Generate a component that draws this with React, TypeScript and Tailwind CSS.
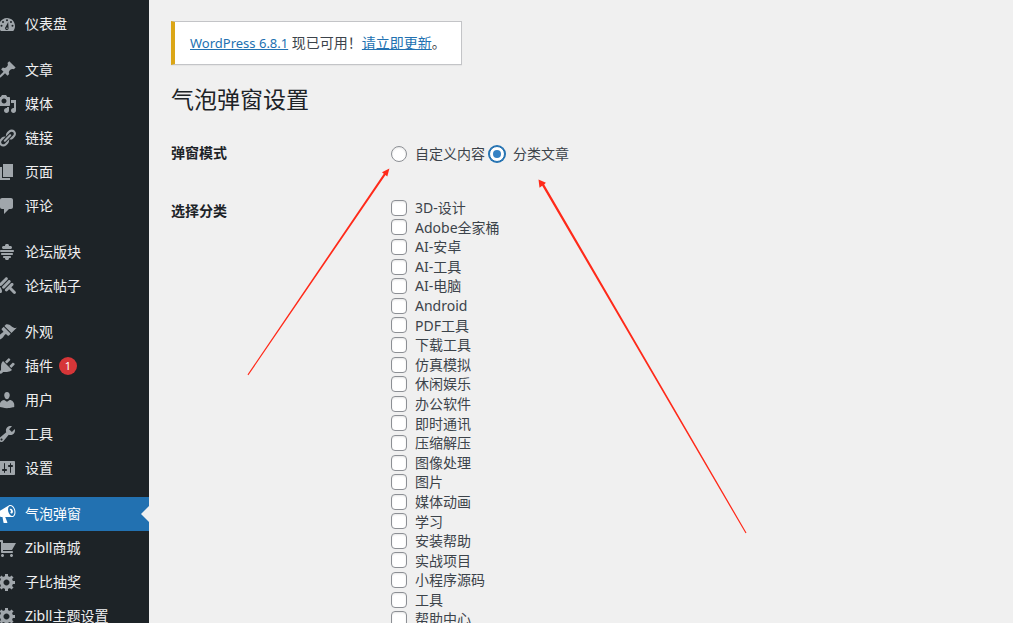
import { useState } from "react";

type MenuItem = { label: string; icon: string; badge?: number; active?: boolean };

const icons: Record<string, string> = {
  dashboard:
    "M3.76 17h12.48c1.1-1.37 1.76-3.11 1.76-5 0-4.42-3.58-8-8-8s-8 3.58-8 8c0 1.89.66 3.63 1.76 5zM10 5.2a1 1 0 1 0 0 2 1 1 0 0 0 0-2zM6 7a1 1 0 1 0 0 2 1 1 0 0 0 0-2zM14 7a1 1 0 1 0 0 2 1 1 0 0 0 0-2zM4.5 10.8a1 1 0 1 0 0 2 1 1 0 0 0 0-2zM15.5 10.8a1 1 0 1 0 0 2 1 1 0 0 0 0-2zM11.2 8l-2.5 4.8c-.2.2-.4.5-.5.8-.4 1.3.5 2.5 1.8 2.4 1.2-.2 1.8-1.4 1.5-2.8zM10 13.4a.8.8 0 1 1 0 1.6.8.8 0 0 1 0-1.6z",
  post: "M10.44 3.02l1.82-1.82 6.36 6.35-1.83 1.82c-1.05-.68-2.48-.57-3.41.36l-.75.75c-.92.93-1.04 2.35-.35 3.41l-1.83 1.82-2.41-2.41-2.8 2.79c-.42.42-3.38 2.71-3.8 2.29s1.86-3.39 2.28-3.81l2.79-2.79L4.1 9.36l1.83-1.82c1.05.69 2.48.57 3.4-.36l.75-.75c.93-.92 1.05-2.35.36-3.41z",
  media:
    "M13 11V4c0-.55-.45-1-1-1h-1.67L9 1H5L3.67 3H2c-.55 0-1 .45-1 1v7c0 .55.45 1 1 1h10c.55 0 1-.45 1-1zM7 4.5c1.38 0 2.5 1.12 2.5 2.5S8.38 9.5 7 9.5 4.5 8.38 4.5 7 5.62 4.5 7 4.5zM14 6h5v10.5c0 1.38-1.12 2.5-2.5 2.5S14 17.88 14 16.5s1.12-2.5 2.5-2.5c.17 0 .34.02.5.05V9h-3V6zm-4 8.05V13h2v3.5c0 1.38-1.12 2.5-2.5 2.5S7 17.88 7 16.5 8.12 14 9.5 14c.17 0 .34.02.5.05z",
  links:
    "M17.74 2.76c1.68 1.69 1.68 4.41 0 6.1l-1.53 1.52c-1.12 1.12-2.7 1.47-4.14 1.09l2.62-2.61.76-.77.76-.76c.84-.84.84-2.2 0-3.04-.84-.85-2.2-.85-3.04 0l-.77.76-3.38 3.38c-.37-1.44-.02-3.02 1.1-4.14l1.52-1.53c1.69-1.68 4.42-1.68 6.1 0zM8.59 13.43l5.34-5.34c.42-.42.42-1.1 0-1.52-.44-.43-1.13-.39-1.53 0l-5.33 5.34c-.42.42-.42 1.1 0 1.52.44.43 1.13.39 1.52 0zm-.76 2.29l4.14-4.15c.38 1.44.03 3.02-1.09 4.14l-1.52 1.53c-1.69 1.68-4.41 1.68-6.1 0-1.68-1.68-1.68-4.42 0-6.1l1.53-1.52c1.12-1.12 2.7-1.47 4.14-1.1l-4.14 4.15c-.85.84-.85 2.2 0 3.05.84.84 2.2.84 3.04 0z",
  page: "M6 15V2h10v13H6zm-1 1h8v2H3V5h2v11z",
  comments:
    "M5 2h9c1.1 0 2 .9 2 2v7c0 1.1-.9 2-2 2h-2l-5 5v-5H5c-1.1 0-2-.9-2-2V4c0-1.1.9-2 2-2z",
  forums:
    "M13.5 7h-7C5.67 7 5 6.33 5 5.5S5.67 4 6.5 4h1.59C8.04 3.84 8 3.68 8 3.5 8 2.67 8.67 2 9.5 2h1c.83 0 1.5.67 1.5 1.5 0 .18-.04.34-.09.5h1.59c.83 0 1.5.67 1.5 1.5S14.33 7 13.5 7zM4 8h12c.55 0 1 .45 1 1s-.45 1-1 1H4c-.55 0-1-.45-1-1s.45-1 1-1zm1 3h10c.55 0 1 .45 1 1s-.45 1-1 1H5c-.55 0-1-.45-1-1s.45-1 1-1zm2 3h6c.55 0 1 .45 1 1s-.45 1-1 1h-1.09c.05.16.09.32.09.5 0 .83-.67 1.5-1.5 1.5h-1c-.83 0-1.5-.67-1.5-1.5 0-.18.04-.34.09-.5H7c-.55 0-1-.45-1-1s.45-1 1-1z",
  topics:
    "M10.44 1.66c-.59-.58-1.54-.58-2.12 0L2.66 7.32c-.58.58-.58 1.53 0 2.12.6.6 1.56.56 2.12 0l5.66-5.66c.58-.58.59-1.53 0-2.12zm2.83 2.83c-.59-.59-1.54-.59-2.12 0l-5.66 5.66c-.59.58-.59 1.53 0 2.12.6.6 1.56.55 2.12 0l5.66-5.66c.58-.58.58-1.53 0-2.12zm1.06 6.72l4.18 4.18c.59.58.59 1.53 0 2.12s-1.54.59-2.12 0l-4.18-4.18-1.77 1.77c-.59.58-1.54.58-2.12 0-.59-.59-.59-1.54 0-2.13l5.66-5.65c.58-.59 1.53-.59 2.12 0 .58.58.58 1.53 0 2.12zM5 15c0-1.59-1.66-4-1.66-4S2 13.78 2 15s.6 2 1.34 2h.32C4.4 17 5 16.59 5 15z",
  appearance:
    "M14.48 11.06L7.41 3.99l1.5-1.5c.5-.56 2.3-.47 3.51.32 1.21.8 1.43 1.28 2.91 2.1 1.18.64 2.45 1.26 4.45.85zm-.71.71L6.7 4.7 4.93 6.47c-.39.39-.39 1.02 0 1.41l1.06 1.06c.39.39.39 1.03 0 1.42-.6.6-1.43 1.11-2.21 1.69-.35.26-.7.53-1.01.84C1.43 14.23.4 16.08 1.4 17.07c.99 1 2.84-.03 4.18-1.36.31-.31.58-.66.85-1.02.57-.78 1.08-1.61 1.69-2.21.39-.39 1.02-.39 1.41 0l1.06 1.06c.39.39 1.02.39 1.41 0z",
  plugins:
    "M13.11 4.36L9.87 7.6 8 5.73l3.24-3.24c.35-.34 1.05-.2 1.56.32.52.51.66 1.21.31 1.55zm-8 1.77l.91-1.12 9.01 9.01-1.19.84c-.71.71-2.63 1.16-3.82 1.16H6.14L4.9 17.26c-.59.59-1.54.59-2.12 0-.59-.58-.59-1.53 0-2.12l1.24-1.24v-3.88c0-1.13.4-3.19 1.09-3.89zm7.26 3.97l3.24-3.24c.34-.35 1.04-.21 1.55.31.52.51.66 1.21.31 1.55l-3.24 3.25z",
  users:
    "M10 9.25c-2.27 0-2.73-3.44-2.73-3.44C7 4.02 7.82 2 9.97 2c2.16 0 2.98 2.02 2.71 3.81 0 0-.41 3.44-2.68 3.44zm0 2.57L12.72 10c2.39 0 4.52 2.33 4.52 4.53v2.49s-3.65 1.13-7.24 1.13c-3.65 0-7.24-1.13-7.24-1.13v-2.49c0-2.25 1.94-4.48 4.47-4.48z",
  tools:
    "M16.68 9.77c-1.34 1.34-3.3 1.67-4.95.99l-5.41 6.52c-.99.99-2.59.99-3.58 0s-.99-2.59 0-3.57l6.52-5.42c-.68-1.65-.35-3.61.99-4.95 1.28-1.28 3.12-1.62 4.72-1.06l-2.89 2.89 2.82 2.82 2.86-2.87c.53 1.58.18 3.39-1.08 4.65zM3.81 16.21c.4.39 1.04.39 1.43 0 .4-.4.4-1.04 0-1.43-.39-.4-1.03-.4-1.43 0-.39.39-.39 1.03 0 1.43z",
  settings:
    "M18 16V4c0-.55-.45-1-1-1H3c-.55 0-1 .45-1 1v12c0 .55.45 1 1 1h14c.55 0 1-.45 1-1zM8 11h1c.55 0 1 .45 1 1s-.45 1-1 1H8v1.5c0 .28-.22.5-.5.5s-.5-.22-.5-.5V13H6c-.55 0-1-.45-1-1s.45-1 1-1h1V5.5c0-.28.22-.5.5-.5s.5.22.5.5V11zm5-2h-1c-.55 0-1-.45-1-1s.45-1 1-1h1V5.5c0-.28.22-.5.5-.5s.5.22.5.5V7h1c.55 0 1 .45 1 1s-.45 1-1 1h-1v5.5c0 .28-.22.5-.5.5s-.5-.22-.5-.5V9z",
  megaphone:
    "M18.15 5.94c.46 1.62.38 3.22-.02 4.48-.42 1.28-1.26 2.18-2.3 2.48-.16.06-.26.06-.4.06-.06.02-.12.02-.18.02-.06.02-.14.02-.22.02h-6.8l2.22 5.5c.02.14-.06.26-.14.34-.08.1-.24.16-.34.16H6.95c-.1 0-.26-.06-.34-.16-.08-.08-.16-.2-.14-.34l-1-5.5H4.25l-.02-.02c-.5.06-1.08-.18-1.54-.62s-.88-1.08-1.06-1.88c-.24-.8-.2-1.56-.02-2.2.18-.62.58-1.08 1.06-1.3l.02-.02 9-5.4c.1-.06.18-.1.24-.16.06-.04.14-.08.24-.12.16-.08.28-.12.5-.18 1.04-.3 2.24.1 3.22.98s1.84 2.24 2.26 3.86zM15.57 11.92c.4-.1.74-.34 1.04-.7.58-.7.86-1.76.86-3.04 0-.64-.1-1.3-.28-1.98-.34-1.36-1.02-2.5-1.78-3.24s-1.68-1.1-2.46-.88c-.82.22-1.4.96-1.7 2-.32 1.04-.28 2.36.06 3.72.38 1.36 1 2.5 1.8 3.24.78.74 1.62 1.1 2.46.88zM13.1 5.1c.9-.7 2.3.2 2.7 1.7.3 1.3 0 2.3-.8 2.6-.8.2-1.4-.3-1.8-1 .6-.2.9-.8.7-1.5-.2-.7-.7-1.2-1.2-1.1.1-.3.2-.5.4-.7z",
  cart: "M6 13h9c.55 0 1 .45 1 1s-.45 1-1 1H5c-.55 0-1-.45-1-1V4H2c-.55 0-1-.45-1-1s.45-1 1-1h3c.55 0 1 .45 1 1v2h13l-4 7H6v1zm-.5 3c.83 0 1.5.67 1.5 1.5S6.33 19 5.5 19 4 18.33 4 17.5 4.67 16 5.5 16zm9 0c.83 0 1.5.67 1.5 1.5s-.67 1.5-1.5 1.5-1.5-.67-1.5-1.5.67-1.5 1.5-1.5z",
  generic:
    "M18 12h-2.18c-.17.7-.44 1.35-.81 1.93l1.54 1.54-2.1 2.1-1.54-1.54c-.58.36-1.23.63-1.91.79V19H8v-2.18c-.68-.16-1.33-.43-1.91-.79l-1.54 1.54-2.12-2.12 1.54-1.54c-.36-.58-.63-1.23-.79-1.91H1V9.03h2.17c.16-.7.44-1.35.8-1.94L2.43 5.55l2.1-2.1 1.54 1.54c.58-.37 1.24-.64 1.93-.81V2h3v2.18c.68.16 1.33.43 1.91.79l1.54-1.54 2.12 2.12-1.54 1.54c.36.59.64 1.24.8 1.94H18V12zm-8.5 1.5c1.66 0 3-1.34 3-3s-1.34-3-3-3-3 1.34-3 3 1.34 3 3 3z",
};

const menu: MenuItem[][] = [
  [{ label: "仪表盘", icon: "dashboard" }],
  [
    { label: "文章", icon: "post" },
    { label: "媒体", icon: "media" },
    { label: "链接", icon: "links" },
    { label: "页面", icon: "page" },
    { label: "评论", icon: "comments" },
  ],
  [
    { label: "论坛版块", icon: "forums" },
    { label: "论坛帖子", icon: "topics" },
  ],
  [
    { label: "外观", icon: "appearance" },
    { label: "插件", icon: "plugins", badge: 1 },
    { label: "用户", icon: "users" },
    { label: "工具", icon: "tools" },
    { label: "设置", icon: "settings" },
  ],
  [
    { label: "气泡弹窗", icon: "megaphone", active: true },
    { label: "Zibll商城", icon: "cart" },
    { label: "子比抽奖", icon: "generic" },
    { label: "Zibll主题设置", icon: "generic" },
  ],
];

const categories = [
  "3D-设计",
  "Adobe全家桶",
  "AI-安卓",
  "AI-工具",
  "AI-电脑",
  "Android",
  "PDF工具",
  "下载工具",
  "仿真模拟",
  "休闲娱乐",
  "办公软件",
  "即时通讯",
  "压缩解压",
  "图像处理",
  "图片",
  "媒体动画",
  "学习",
  "安装帮助",
  "实战项目",
  "小程序源码",
  "工具",
  "帮助中心",
];

const modes = ["自定义内容", "分类文章"];

function MenuLink({ item }: { item: MenuItem }) {
  return (
    <li>
      <a
        href="#"
        aria-current={item.active ? "page" : undefined}
        className={
          item.active
            ? "relative flex h-[34px] items-center gap-2 bg-[#2271b1] text-white"
            : "flex h-[34px] items-center gap-2 text-[#f0f0f1]"
        }
      >
        <svg
          viewBox="0 0 20 20"
          aria-hidden="true"
          className={item.active ? "size-5 shrink-0 fill-white" : "size-5 shrink-0 fill-[#a0a6ab]"}
        >
          <path fillRule="evenodd" d={icons[item.icon]} />
        </svg>
        <span className="whitespace-nowrap">{item.label}</span>
        {item.badge && (
          <span className="-ml-0.5 flex size-[18px] items-center justify-center rounded-full bg-[#d63638] text-[11px] text-white">
            {item.badge}
          </span>
        )}
        {item.active && (
          <span className="absolute right-0 top-1/2 -translate-y-1/2 border-y-8 border-r-8 border-y-transparent border-r-[#f0f0f0]" />
        )}
      </a>
    </li>
  );
}

function ModeRadio({ label, checked, onSelect }: { label: string; checked: boolean; onSelect: () => void }) {
  return (
    <label className="flex items-center gap-2">
      <input
        type="radio"
        name="mode"
        checked={checked}
        onChange={onSelect}
        className="m-0 grid size-4 shrink-0 appearance-none place-items-center rounded-full border border-[#8c8f94] bg-white shadow-[inset_0_1px_2px_rgba(0,0,0,0.1)] before:size-2 before:rounded-full checked:border-[#2271b1] checked:shadow-[0_0_0_1px_#2271b1] checked:before:bg-[#3582c4]"
      />
      {label}
    </label>
  );
}

function Annotations() {
  return (
    <svg
      width="1013"
      height="623"
      aria-hidden="true"
      className="pointer-events-none absolute left-0 top-0 fill-[#ff2a1a]"
    >
      <path d="M247.5 374.6L383.8 173.8 382 172.3 389.4 168.5 387.3 176.5 385.5 175 248.4 375.3z" />
      <path d="M746.5 532.7L544.2 184.4 545.9 182.7 538.5 179.5 539.5 187.8 542.2 185.7 745.5 533.3z" />
    </svg>
  );
}

export default function App() {
  const [mode, setMode] = useState("分类文章");

  return (
    <div className="relative flex h-screen overflow-hidden bg-[#f0f0f0] font-['Noto_Sans','Noto_Sans_CJK_SC',sans-serif] text-sm text-[#3c434a]">
      <nav aria-label="主菜单" className="w-[149px] shrink-0 overflow-hidden bg-[#1d2327] pt-[7px]">
        <div className="-ml-[3px] flex flex-col gap-3">
          {menu.map((group) => (
            <ul key={group[0].label}>
              {group.map((item) => (
                <MenuLink key={item.label} item={item} />
              ))}
            </ul>
          ))}
        </div>
      </nav>

      <main className="flex min-w-0 flex-1 flex-col items-start px-[22px] pt-[21px]">
        <p className="flex h-11 shrink-0 items-center border border-l-4 border-[#c3c4c7] border-l-[#dba617] bg-white px-[15px] shadow-[0_1px_1px_rgba(0,0,0,0.04)]">
          <span>
            <a href="#" className="text-[13px] text-[#2271b1] underline">
              WordPress 6.8.1
            </a>{" "}
            现已可用！
            <a href="#" className="text-[#2271b1] underline">
              请立即更新
            </a>
            。
          </span>
        </p>
        <h1 className="mt-5 text-[23px] leading-7 text-[#1d2327]">气泡弹窗设置</h1>

        <form className="mt-[30px] flex w-full flex-col gap-9">
          <div role="radiogroup" aria-labelledby="mode-label" className="flex">
            <span id="mode-label" className="w-[220px] shrink-0 font-semibold leading-5 text-[#1d2327]">
              弹窗模式
            </span>
            <div className="flex items-center gap-1 leading-[22px]">
              {modes.map((name) => (
                <ModeRadio key={name} label={name} checked={mode === name} onSelect={() => setMode(name)} />
              ))}
            </div>
          </div>
          <div role="group" aria-labelledby="category-label" className="flex">
            <span id="category-label" className="w-[220px] shrink-0 font-semibold leading-5 text-[#1d2327]">
              选择分类
            </span>
            <ul className="-mt-[3px] leading-[1.4]">
              {categories.map((name) => (
                <li key={name}>
                  <label className="flex items-center gap-2">
                    <input
                      type="checkbox"
                      className="m-0 size-4 shrink-0 appearance-none rounded border border-[#8c8f94] bg-white shadow-[inset_0_1px_2px_rgba(0,0,0,0.1)] checked:bg-[#3582c4]"
                    />
                    {name}
                  </label>
                </li>
              ))}
            </ul>
          </div>
        </form>
      </main>
      <Annotations />
    </div>
  );
}
